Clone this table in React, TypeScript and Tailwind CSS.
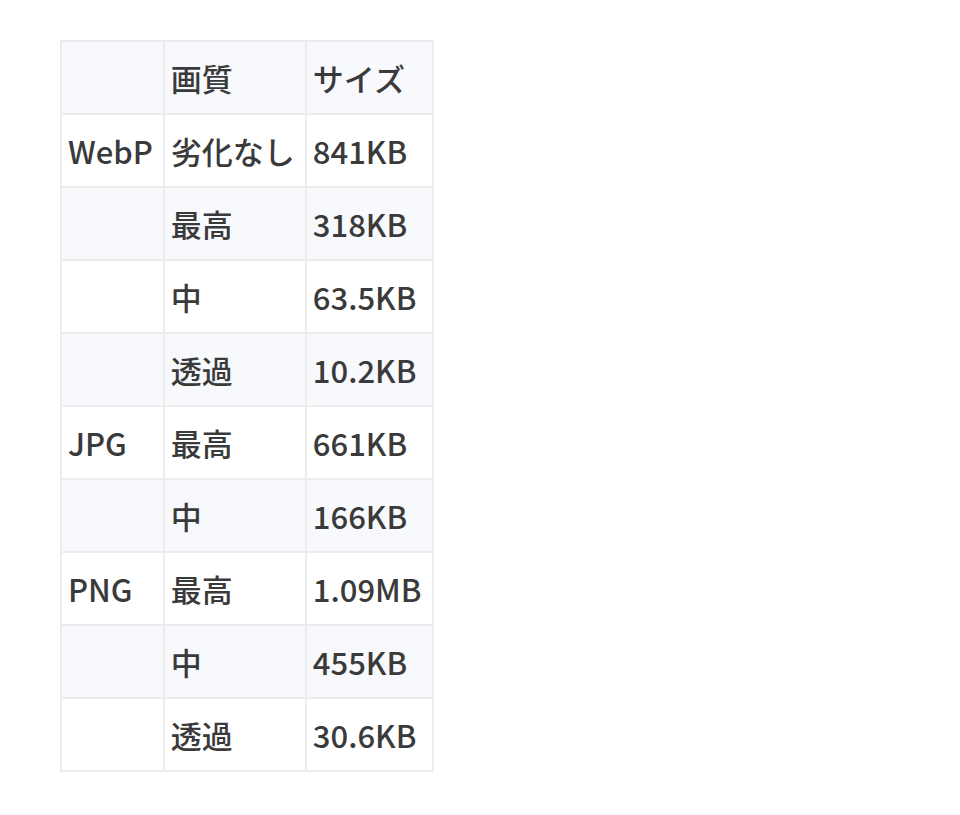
const rows: { format: string; quality: string; size: string }[] = [
  { format: "WebP", quality: "劣化なし", size: "841KB" },
  { format: "", quality: "最高", size: "318KB" },
  { format: "", quality: "中", size: "63.5KB" },
  { format: "", quality: "透過", size: "10.2KB" },
  { format: "JPG", quality: "最高", size: "661KB" },
  { format: "", quality: "中", size: "166KB" },
  { format: "PNG", quality: "最高", size: "1.09MB" },
  { format: "", quality: "中", size: "455KB" },
  { format: "", quality: "透過", size: "30.6KB" },
];

const cell =
  "border-2 border-[#ececec] pl-[6px] pr-[10px] py-[13px] text-left font-medium leading-[45px] whitespace-nowrap";

export default function App() {
  return (
    <div
      className="min-h-screen bg-white pt-10 pl-[60px] text-[31px] text-[#3a3a3a]"
      style={{ fontFamily: '"Noto Sans CJK JP", "Noto Sans", sans-serif' }}
    >
      <table className="border-collapse">
        <thead>
          <tr className="bg-[#f7f9fc]">
            <th className={cell + " w-[102px]"}></th>
            <th className={cell}>画質</th>
            <th className={cell + " w-[127px]"}>サイズ</th>
          </tr>
        </thead>
        <tbody>
          {rows.map((r, i) => (
            <tr key={i} className={i % 2 === 1 ? "bg-[#f7f9fc]" : "bg-white"}>
              <td className={cell}>{r.format}</td>
              <td className={cell}>{r.quality}</td>
              <td className={cell}>{r.size}</td>
            </tr>
          ))}
        </tbody>
      </table>
    </div>
  );
}
